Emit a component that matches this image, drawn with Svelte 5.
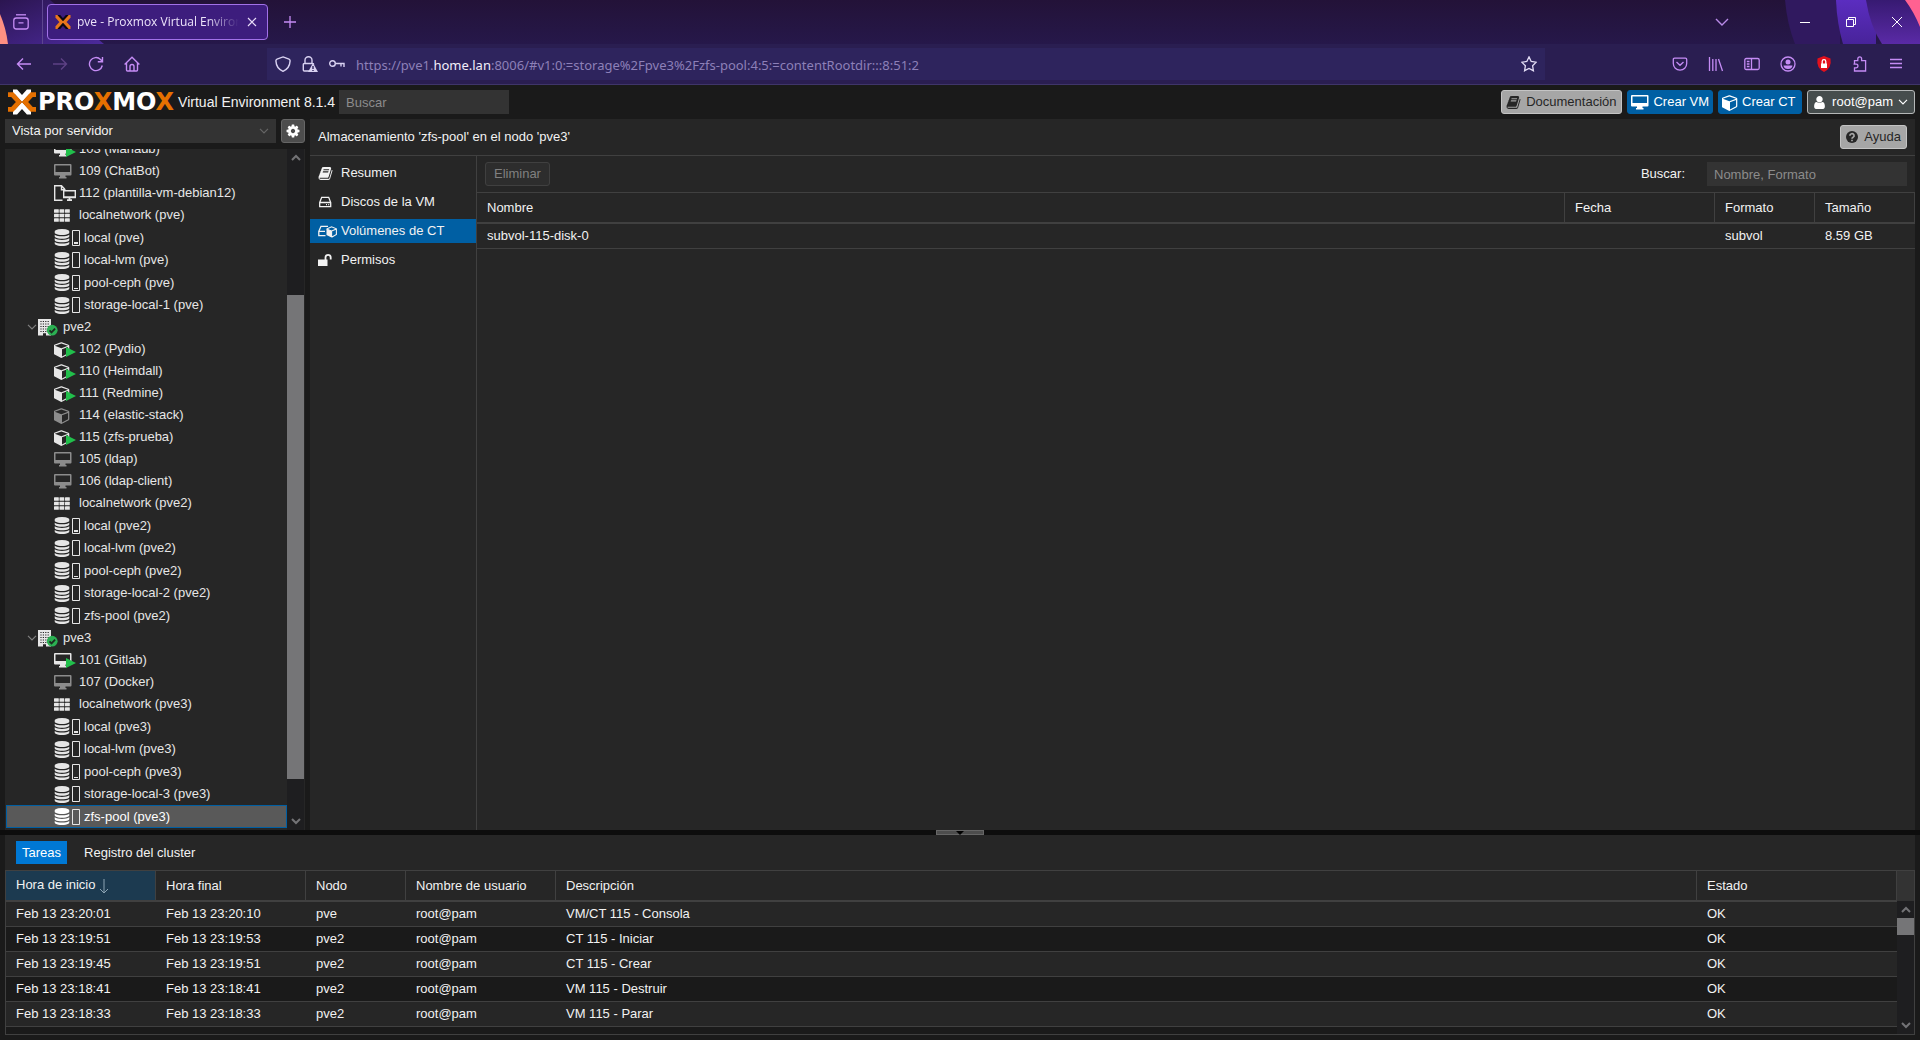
<script>
	let view = 'server';
	let search = '';
	let filter = '';
	let url =
		'https://pve1.home.lan:8006/#v1:0:=storage%2Fpve3%2Fzfs-pool:4:5:=contentRootdir:::8:51:2';
	let selected = 'zfs-pool (pve3)';
	let activeMenu = 'Volúmenes de CT';
	let activeTab = 'Tareas';

	$: host = url.indexOf('home.lan');

	const nodes = [
		{
			name: 'pve',
			guests: [
				{ text: '103 (Mariadb)', icon: 'desktop', running: true },
				{ text: '109 (ChatBot)', icon: 'desktop' },
				{ text: '112 (plantilla-vm-debian12)', icon: 'template', running: false }
			],
			storages: [
				{ name: 'local', usage: 2 },
				{ name: 'local-lvm', usage: 0 },
				{ name: 'pool-ceph', usage: 1 },
				{ name: 'storage-local-1', usage: 0 }
			]
		},
		{
			name: 'pve2',
			guests: [
				{ text: '102 (Pydio)', icon: 'cube', running: true },
				{ text: '110 (Heimdall)', icon: 'cube', running: true },
				{ text: '111 (Redmine)', icon: 'cube', running: true },
				{ text: '114 (elastic-stack)', icon: 'cube' },
				{ text: '115 (zfs-prueba)', icon: 'cube', running: true },
				{ text: '105 (ldap)', icon: 'desktop' },
				{ text: '106 (ldap-client)', icon: 'desktop' }
			],
			storages: [
				{ name: 'local', usage: 2 },
				{ name: 'local-lvm', usage: 0 },
				{ name: 'pool-ceph', usage: 1 },
				{ name: 'storage-local-2', usage: 0 },
				{ name: 'zfs-pool', usage: 0 }
			]
		},
		{
			name: 'pve3',
			guests: [
				{ text: '101 (Gitlab)', icon: 'desktop', running: true },
				{ text: '107 (Docker)', icon: 'desktop' }
			],
			storages: [
				{ name: 'local', usage: 2 },
				{ name: 'local-lvm', usage: 0 },
				{ name: 'pool-ceph', usage: 1 },
				{ name: 'storage-local-3', usage: 0 },
				{ name: 'zfs-pool', usage: 0 }
			]
		}
	];

	const menu = [
		{ text: 'Resumen', icon: 'book' },
		{ text: 'Discos de la VM', icon: 'hdd' },
		{ text: 'Volúmenes de CT', icon: 'volume' },
		{ text: 'Permisos', icon: 'unlock' }
	];

	const tasks = [
		{ start: 'Feb 13 23:20:01', end: 'Feb 13 23:20:10', node: 'pve', desc: 'VM/CT 115 - Consola' },
		{ start: 'Feb 13 23:19:51', end: 'Feb 13 23:19:53', node: 'pve2', desc: 'CT 115 - Iniciar' },
		{ start: 'Feb 13 23:19:45', end: 'Feb 13 23:19:51', node: 'pve2', desc: 'CT 115 - Crear' },
		{ start: 'Feb 13 23:18:41', end: 'Feb 13 23:18:41', node: 'pve2', desc: 'VM 115 - Destruir' },
		{ start: 'Feb 13 23:18:33', end: 'Feb 13 23:18:33', node: 'pve2', desc: 'VM 115 - Parar' }
	];

	const select = (name) => {
		selected = name;
	};
</script>

{#snippet icon(name)}
	{#if name === 'desktop'}
		<svg class="icon" width="18" height="16" viewBox="0 0 18 16" fill="currentColor">
			<path
				fill-rule="evenodd"
				d="M1 1h15.500a1 1 0 0 1 1 1v9.500a1 1 0 0 1-1 1H11.500v1.500h1V15.500H5v-1.500h1v-1.500H1a1 1 0 0 1-1-1V2a1 1 0 0 1 1-1zM1.500 2.500v6.500h14.500V2.500z"
			/>
		</svg>
	{:else if name === 'template'}
		<svg class="icon" width="22" height="18" viewBox="0 0 22 18" fill="none" stroke="currentColor">
			<path stroke-width="1.4" d="M8.500 16.300H.7V1.700h6.800l3.300 3.500M7.500 1.700v4h4" />
			<path stroke-width="1.4" d="M9.700 13.600V6.700h11.600v6.900z" />
			<path stroke-width="1.800" d="M9.700 13.200h11.600M13 16.200h5M15.500 13v3" />
		</svg>
	{:else if name === 'cube'}
		<svg class="icon" width="16" height="17" viewBox="64 0 1664 1792" fill="currentColor">
			<path
				d="M896 1629l640-349v-636l-640 233v752zm-64-865l698-254-698-254-698 254zm832-252v768q0 35-18 65t-49 47l-704 384q-28 16-61 16t-61-16l-704-384q-31-17-49-47t-18-65v-768q0-40 23-73t61-47l704-256q22-8 44-8t44 8l704 256q38 14 61 47t23 73z"
			/>
		</svg>
	{:else if name === 'grid'}
		<svg class="icon" width="16" height="13" viewBox="0 0 16 13" fill="currentColor">
			{#each [0, 5.5, 11] as x}
				{#each [0.2, 4.7, 9.2] as y}
					<rect {x} {y} width="4.8" height="3.6" rx=".5" />
				{/each}
			{/each}
		</svg>
	{:else if name === 'database'}
		<svg class="icon" width="16" height="17" viewBox="64 0 1664 1792" fill="currentColor">
			<path
				d="M896 768q237 0 443-43t325-127v170q0 69-103 128t-280 93.500-385 34.500-385-34.500-280-93.500-103-128v-170q119 84 325 127t443 43zm0 768q237 0 443-43t325-127v170q0 69-103 128t-280 93.500-385 34.500-385-34.500-280-93.500-103-128v-170q119 84 325 127t443 43zm0-384q237 0 443-43t325-127v170q0 69-103 128t-280 93.500-385 34.500-385-34.500-280-93.500-103-128v-170q119 84 325 127t443 43zm0-1152q208 0 385 34.500t280 93.500 103 128v128q0 69-103 128t-280 93.500-385 34.500-385-34.500-280-93.500-103-128v-128q0-69 103-128t280-93.500 385-34.500z"
			/>
		</svg>
	{:else if name === 'building'}
		<svg class="icon" width="20" height="17" viewBox="0 0 20 17">
			<path fill="#e6e6e6" d="M0 0h13v16.500H8V14.200H5v2.300H0z" />
			<path
				stroke="#262626"
				stroke-width="1"
				stroke-dasharray="1.200 1.200"
				d="M2.400 2.500h8.500M2.400 5h8.500M2.400 7.500h8.500M2.400 10h8.500M2.400 12.500h8.500"
			/>
			<circle cx="14.200" cy="11.200" r="5.400" fill="#2bb052" />
			<path fill="none" stroke="#1c2b20" stroke-width="1.800" d="M11.500 11.400l2 2 3.600-3.800" />
		</svg>
	{:else if name === 'book'}
		<svg class="icon" width="15" height="15" viewBox="0 0 1792 1792" fill="currentColor">
			<path
				d="M1703 478q40 57 18 129l-275 906q-19 64-76.500 107.500t-122.500 43.500h-923q-77 0-148.500-53.500t-99.500-131.500q-24-67-2-127 0-4 3-27t4-37q1-8-3-21.500t-3-19.500q2-11 8-21t16.500-23.500 16.500-23.500q23-38 45-91.500t30-91.500q3-10 .5-30t-.5-28q3-11 17-28t17-23q21-36 42-92t25-90q1-9-2.500-32t.5-28q4-13 22-30.500t22-22.500q19-26 42.500-84.500t27.500-96.500q1-8-3-25.500t-2-26.500q2-8 9-18t18-23 17-21q8-12 16.500-30.500t15-35 16-36 19.500-32 26.500-23.500 36-11.500 47.500 5.500l-1 3q38-9 51-9h761q74 0 114 56t18 130l-274 906q-36 119-71.500 153.500t-128.500 34.500h-869q-27 0-38 15-11 16-1 43 24 70 144 70h923q29 0 56-15.500t35-41.500l300-987q7-22 5-57 38 15 59 43zm-1064 2q-4 13 2 22.500t20 9.500h608q13 0 25.500-9.500t16.500-22.500l21-64q4-13-2-22.500t-20-9.500h-608q-13 0-25.500 9.500t-16.500 22.500zm-83 256q-4 13 2 22.500t20 9.500h608q13 0 25.500-9.500t16.500-22.500l21-64q4-13-2-22.500t-20-9.500h-608q-13 0-25.500 9.500t-16.500 22.500z"
			/>
		</svg>
	{:else if name === 'hdd'}
		<svg class="icon" width="15" height="14" viewBox="0 0 15 14" fill="none" stroke="currentColor">
			<path stroke-width="1.300" d="M1.700 7.500L3.700 2.300h7l2 5.200v4.200h-11zM1.700 7.500h11" />
			<path stroke-width="1.300" d="M8 9.700h1M10.200 9.700h1" />
		</svg>
	{:else if name === 'volume'}
		<svg class="icon" width="19" height="14" viewBox="0 0 19 14" fill="none" stroke="currentColor">
			<path stroke-width="1.300" d="M7.500 11.700H.8V7.300l2.200-5h7M.8 7.300H7" />
			<path fill="currentColor" stroke="none" d="M8.500 5l5 2v6.500l-5-2.500z" />
			<path stroke-width="1.100" d="M8.600 5l5-2.200 4.800 2v5.700l-4.800 2.700M13.600 7l4.800-2M8.600 5l5 2v6" />
		</svg>
	{:else if name === 'unlock'}
		<svg class="icon" width="15" height="14" viewBox="0 0 15 14" fill="currentColor">
			<path d="M0 6.500h9.500v6.500H0z" />
			<path
				fill="none"
				stroke="currentColor"
				stroke-width="1.800"
				d="M7.500 7V4.500a2.600 2.600 0 0 1 5.200 0V6.500"
			/>
		</svg>
	{:else if name === 'user'}
		<svg class="icon" width="15" height="15" viewBox="128 0 1536 1792" fill="currentColor">
			<path
				d="M1536 1399q0 109-62.500 187t-150.500 78h-854q-88 0-150.500-78t-62.500-187q0-85 8.500-160.500t31.500-152 58.500-131 94-89 134.500-34.500q131 128 313 128t313-128q76 0 134.500 34.500t94 89 58.500 131 31.500 152 8.500 160.500zm-256-887q0 159-112.500 271.500t-271.500 112.500-271.500-112.500-112.500-271.500 112.500-271.500 271.500-112.500 271.500 112.500 112.500 271.500z"
			/>
		</svg>
	{:else if name === 'help'}
		<svg class="icon" width="14" height="14" viewBox="0 0 14 14">
			<circle cx="7" cy="7" r="6" fill="currentColor" />
			<path
				fill="none"
				stroke="#a6a6a6"
				stroke-width="1.700"
				d="M4.900 5.700a2.100 1.900 0 1 1 3.200 1.500Q7 7.800 7 8.800M7 9.800v1.500"
			/>
		</svg>
	{:else if name === 'cog'}
		<svg class="icon" width="14" height="14" viewBox="64 64 1664 1664" fill="currentColor">
			<path
				d="M1152 896q0-106-75-181t-181-75-181 75-75 181 75 181 181 75 181-75 75-181zm512-109v222q0 12-8 23t-20 13l-185 28q-19 54-39 91 35 50 107 138 10 12 10 25t-9 23q-27 37-99 108t-94 71q-12 0-26-9l-138-108q-44 23-91 38-16 136-29 186-7 28-36 28h-222q-14 0-24.500-8.500t-11.500-21.500l-28-184q-49-16-90-37l-141 107q-10 9-25 9-14 0-25-11-126-114-165-168-7-10-7-23 0-12 8-23 15-21 51-66.500t54-70.500q-27-50-41-99l-183-27q-13-2-21-12.500t-8-23.500v-222q0-12 8-23t19-13l186-28q14-46 39-92-40-57-107-138-10-12-10-24 0-10 9-23 26-36 98.500-107.500t94.500-71.500q13 0 26 10l138 107q44-23 91-38 16-136 29-186 7-28 36-28h222q14 0 24.500 8.500t11.500 21.500l28 184q49 16 90 37l142-107q9-9 24-9 13 0 25 10 129 119 165 170 7 8 7 22 0 12-8 23-15 21-51 66.500t-54 70.500q26 50 41 98l183 28q13 2 21 12.500t8 23.500z"
			/>
		</svg>
	{:else if name === 'down'}
		<svg class="icon" width="10" height="6" viewBox="0 0 10 6" fill="none" stroke="currentColor">
			<path stroke-width="1.200" d="M1 .8l4 4 4-4" />
		</svg>
	{:else if name === 'up-arrow'}
		<svg class="icon" width="10" height="7" viewBox="0 0 10 7" fill="none" stroke="currentColor">
			<path stroke-width="2" d="M1 6l4-4 4 4" />
		</svg>
	{:else if name === 'down-arrow'}
		<svg class="icon" width="10" height="7" viewBox="0 0 10 7" fill="none" stroke="currentColor">
			<path stroke-width="2" d="M1 1l4 4 4-4" />
		</svg>
	{/if}
{/snippet}

<div class="page">
	<div class="tabbar">
		<svg class="theme-left" width="104" height="44" viewBox="0 0 104 44">
			<defs>
				<linearGradient id="left" x1="0" y1="0" x2="1" y2="1">
					<stop offset="0" stop-color="#2b1550" />
					<stop offset="1" stop-color="#4c2a9c" />
				</linearGradient>
			</defs>
			<path fill="url(#left)" d="M0 0h50l54 44H0z" />
			<path fill="#ff9082" d="M0 14q6 14 8 30H0z" />
		</svg>
		<svg class="theme-right" width="140" height="44" viewBox="0 0 140 44">
			<defs>
				<linearGradient id="right" x1="0" y1="0" x2="0" y2="1">
					<stop offset="0" stop-color="#5b2dc0" />
					<stop offset="1" stop-color="#48239a" />
				</linearGradient>
				<linearGradient id="edge" x1="0" y1="0" x2="0" y2="1">
					<stop offset="0" stop-color="#371a72" />
					<stop offset="1" stop-color="#5a2aa6" />
				</linearGradient>
			</defs>
			<path fill="#30195f" d="M5 0h55v44H15Q7 24 5 0z" />
			<path fill="url(#right)" d="M56 0h40v44H63Q57 24 56 0z" />
			<path fill="url(#edge)" d="M86 0h54v44h-38Q90 26 86 0z" />
			<path fill="#ff6191" d="M125 0h15v27Q134 12 125 0z" />
		</svg>
		<button class="chrome-btn first" aria-label="Firefox View">
			<svg width="16" height="16" viewBox="0 0 16 16" fill="none" stroke="#c58cf5" stroke-width="1.300">
				<path d="M3 .8h10" />
				<path d="M.8 6.500a2.500 2.500 0 0 1 2.500-2.500h9.400a2.500 2.500 0 0 1 2.500 2.500v6a2.500 2.500 0 0 1-2.500 2.500H3.300a2.500 2.500 0 0 1-2.500-2.500zM5.500 8.800h5" />
			</svg>
		</button>
		<div class="tab">
			<svg width="16" height="14" viewBox="0 0 16 14" fill="none" stroke-width="3.200">
				<path stroke="#0d0713" d="M3 0l5 5.500L13 0M3 14l5-5.500 5 5.500" />
				<path stroke="#e9761c" d="M.5 1.500h1L6.500 7l-5 5.500h-1M15.500 1.500h-1L9.500 7l5 5.500h1" />
			</svg>
			<span class="tab-title">pve - Proxmox Virtual Environment</span>
			<button class="chrome-btn small" aria-label="Cerrar pestaña">
				<svg width="10" height="10" viewBox="0 0 10 10" stroke="#e8dcf8" stroke-width="1.200">
					<path d="M1 1l8 8M9 1L1 9" />
				</svg>
			</button>
		</div>
		<button class="chrome-btn plus" aria-label="Nueva pestaña">
			<svg width="12" height="12" viewBox="0 0 12 12" stroke="#c58cf5" stroke-width="1.300">
				<path d="M6 0v12M0 6h12" />
			</svg>
		</button>
		<div class="window-btns">
			<button class="chrome-btn" aria-label="Listar pestañas">
				<svg width="14" height="8" viewBox="0 0 14 8" fill="none" stroke="#b98be8" stroke-width="1.400">
					<path d="M1 1l6 6 6-6" />
				</svg>
			</button>
			<button class="chrome-btn wide" aria-label="Minimizar">
				<svg width="10" height="10" viewBox="0 0 10 10" stroke="#fff"><path d="M0 5.500h10" /></svg>
			</button>
			<button class="chrome-btn wide" aria-label="Restaurar">
				<svg width="10" height="10" viewBox="0 0 10 10" fill="none" stroke="#fff">
					<path d="M.5 2.500h7v7h-7zM2.500 2.500v-2h7v7h-2" />
				</svg>
			</button>
			<button class="chrome-btn wide" aria-label="Cerrar">
				<svg width="10" height="10" viewBox="0 0 10 10" stroke="#fff"><path d="M0 0l10 10M10 0L0 10" /></svg>
			</button>
		</div>
	</div>

	<div class="navbar">
		<div class="nav-left">
			<button class="chrome-btn" aria-label="Atrás">
				<svg width="16" height="16" viewBox="0 0 16 16" fill="none" stroke="#c58cf5" stroke-width="1.400">
					<path d="M15 8H1.500M7 2.500L1.500 8 7 13.500" />
				</svg>
			</button>
			<button class="chrome-btn" aria-label="Adelante">
				<svg width="16" height="16" viewBox="0 0 16 16" fill="none" stroke="#5e4285" stroke-width="1.400">
					<path d="M1 8h13.500M9 2.500L14.500 8 9 13.500" />
				</svg>
			</button>
			<button class="chrome-btn" aria-label="Recargar">
				<svg width="16" height="16" viewBox="0 0 16 16" fill="none" stroke="#c58cf5" stroke-width="1.400">
					<path d="M14.300 9.500A6.500 6.500 0 1 1 12.500 3.400L14.300 5.200M14.500 1v4.700H9.800" />
				</svg>
			</button>
			<button class="chrome-btn" aria-label="Inicio">
				<svg width="16" height="16" viewBox="0 0 16 16" fill="none" stroke="#c58cf5" stroke-width="1.400">
					<path d="M.6 8.500L8 1.300l7.400 7.200M2.500 7v7a1 1 0 0 0 1 1h9a1 1 0 0 0 1-1V7" />
					<path d="M6 15v-4.500a2 2 0 0 1 4 0V15" />
				</svg>
			</button>
		</div>
		<div class="urlbar">
			<svg width="16" height="16" viewBox="0 0 16 16" fill="none" stroke="#d9d2f2" stroke-width="1.400">
				<path d="M8 .9l6 2.200q1.200.5 1.100 1.800Q14.700 12.500 8 15.300 1.300 12.500.9 4.900.8 3.600 2 3.100z" />
			</svg>
			<svg width="16" height="16" viewBox="0 0 16 16" fill="none" stroke="#d9d2f2" stroke-width="1.400">
				<path d="M8 15H2.300a1 1 0 0 1-1-1V8.500a1 1 0 0 1 1-1h8.400q1 0 1 1M3 7.500V4.300a3.500 3.500 0 0 1 7 0v3.200" />
				<path fill="#d9d2f2" stroke="none" d="M11 7l5 9H6z" />
				<path stroke="#2e245d" d="M11 10v3M11 14v1" />
			</svg>
			<svg width="16" height="16" viewBox="0 0 16 16" fill="none" stroke="#d9d2f2" stroke-width="1.400">
				<circle cx="3.500" cy="7.500" r="2.800" />
				<path d="M6.500 7.500H15v3.500M12 7.500v3" />
			</svg>
			<div class="url">
				<input type="text" aria-label="Dirección" bind:value={url} />
				<span class="url-text" aria-hidden="true"
					>{url.slice(0, host)}<b>{url.slice(host, host + 8)}</b>{url.slice(host + 8)}</span
				>
			</div>
			<svg width="16" height="16" viewBox="0 0 16 16" fill="none" stroke="#e3ddf5" stroke-width="1.300">
				<path d="M8 .9l2.200 4.600 5 .7-3.600 3.500.8 5L8 12.400l-4.400 2.300.8-5L.8 6.200l5-.7z" />
			</svg>
		</div>
		<div class="nav-right">
			<button class="chrome-btn" aria-label="Pocket">
				<svg width="16" height="16" viewBox="0 0 16 16" fill="none" stroke="#c58cf5" stroke-width="1.300">
					<path d="M1.300 3.500q0-1.300 1.300-1.300h10.800q1.300 0 1.300 1.300v4a6.700 6.700 0 0 1-13.400 0zM4.500 6L8 9.300 11.500 6" />
				</svg>
			</button>
			<button class="chrome-btn" aria-label="Biblioteca">
				<svg width="16" height="16" viewBox="0 0 16 16" stroke="#c58cf5" stroke-width="1.300">
					<path d="M1.500 1v14M4.800 3v12M8 3v12M10.500 3l4 12" />
				</svg>
			</button>
			<button class="chrome-btn" aria-label="Barra lateral">
				<svg width="16" height="16" viewBox="0 0 16 16" fill="none" stroke="#c58cf5" stroke-width="1.300">
					<path d="M.8 4q0-1.500 1.500-1.500h11.400q1.500 0 1.500 1.500v8q0 1.500-1.500 1.500H2.300Q.8 13.500.8 12zM7.500 2.500v11M2.800 5.500h2.700M2.800 8h2.700M2.800 10.500h2.700" />
				</svg>
			</button>
			<button class="chrome-btn" aria-label="Cuenta">
				<svg width="16" height="16" viewBox="0 0 16 16" fill="none" stroke="#c58cf5" stroke-width="1.300">
					<circle cx="8" cy="8" r="7" />
					<circle cx="8" cy="6" r="2.500" fill="#c58cf5" stroke="none" />
					<path fill="#c58cf5" stroke="none" d="M3.500 9.500h9Q12 13 8 13T3.500 9.500z" />
				</svg>
			</button>
			<button class="chrome-btn" aria-label="Extensión">
				<svg width="16" height="16" viewBox="0 0 16 16">
					<path fill="#e3101c" d="M8 0l6.500 2.500Q16 12 8 16 0 12 1.500 2.500z" />
					<path fill="#fff" d="M5 7.500h6V12H5z" />
					<path fill="none" stroke="#fff" stroke-width="1.300" d="M6.200 8V5.500a1.800 1.800 0 0 1 3.600 0V8" />
				</svg>
			</button>
			<button class="chrome-btn" aria-label="Extensiones">
				<svg width="16" height="16" viewBox="0 0 16 16" fill="none" stroke="#c58cf5" stroke-width="1.300">
					<path d="M2.500 7.500V4.700h3.300V2.800a1.900 1.900 0 0 1 3.800 0v1.900h4V15H2.500v-3.200h1.700a1.800 1.800 0 0 0 0-3.600H1.500" />
				</svg>
			</button>
			<button class="chrome-btn" aria-label="Menú">
				<svg width="16" height="16" viewBox="0 0 16 16" stroke="#c58cf5" stroke-width="1.300">
					<path d="M2 3.500h12M2 7.500h12M2 11.500h12" />
				</svg>
			</button>
		</div>
	</div>

	<header>
		<div class="logo">
			<svg width="30" height="26" viewBox="0 0 30 26" fill="none" stroke-width="4.800">
				<path stroke="#fff" d="M6 2.800h3L15 9.500l6-6.700h3M6 23.200h3L15 16.500l6 6.700h3" />
				<path stroke="#e57000" d="M1 5.600h4.300L12 13l-6.700 7.400H1M29 5.600h-4.300L18 13l6.700 7.400H29" />
			</svg>
			<span class="brand">PRO<i>X</i>MO<i>X</i></span>
		</div>
		<span class="product">Virtual Environment 8.1.4</span>
		<input class="field" type="text" placeholder="Buscar" aria-label="Buscar" bind:value={search} />
		<div class="actions">
			<button class="btn grey">{@render icon('book')}Documentación</button>
			<button class="btn blue">{@render icon('desktop')}Crear VM</button>
			<button class="btn blue">{@render icon('cube')}Crear CT</button>
			<button class="btn user">{@render icon('user')}root@pam{@render icon('down')}</button>
		</div>
	</header>

	<main>
		<aside>
			<div class="view">
				<div class="view-select">
					<select aria-label="Vista" bind:value={view}>
						<option value="server">Vista por servidor</option>
					</select>
					{@render icon('down')}
				</div>
				<button class="gear" aria-label="Ajustes">{@render icon('cog')}</button>
			</div>
			<div class="tree-wrap">
				<div class="tree">
					{#each nodes as node, n}
						<!-- the first node's own row is scrolled out of view -->
						{#if n > 0}
							<button class="row node" on:click={() => select(node.name)}>
								<span class="expander">{@render icon('down')}</span>
								{@render icon('building')}
								{node.name}
							</button>
						{/if}
						{#each node.guests as guest}
							<button
								class="row guest"
								class:stopped={!guest.running && guest.icon !== 'template'}
								on:click={() => select(guest.text)}
							>
								<span class="guest-icon">
									{@render icon(guest.icon)}
									{#if guest.running}
										<svg class="play" width="10" height="10" viewBox="0 0 10 10">
											<path fill="#21bf4b" d="M0 0l10 5-10 5z" />
										</svg>
									{/if}
								</span>
								<span>{guest.text}</span>
							</button>
						{/each}
						<button class="row guest" on:click={() => select(`localnetwork (${node.name})`)}>
							<span class="guest-icon">{@render icon('grid')}</span>
							<span>localnetwork ({node.name})</span>
						</button>
						<div class="storages">
							{#each node.storages as storage}
								<button
									class="row storage"
									class:selected={selected === `${storage.name} (${node.name})`}
									on:click={() => select(`${storage.name} (${node.name})`)}
								>
									{@render icon('database')}
									<svg class="usage" width="8" height="16" viewBox="0 0 8 16">
										<path fill="none" stroke="#e6e6e6" d="M.5.5h7v15h-7z" />
										{#if storage.usage}
											<rect x="2" y={14 - storage.usage} width="4" height={storage.usage} fill="#e6e6e6" />
										{/if}
									</svg>
									<span>{storage.name} ({node.name})</span>
								</button>
							{/each}
						</div>
					{/each}
				</div>
				<div class="scroll tree-scroll">
					<span class="arrow">{@render icon('up-arrow')}</span>
					<div class="track tree-track"><div class="thumb"></div></div>
					<span class="arrow">{@render icon('down-arrow')}</span>
				</div>
			</div>
		</aside>

		<section class="content">
			<div class="title">
				<span>Almacenamiento 'zfs-pool' en el nodo 'pve3'</span>
				<button class="btn grey">{@render icon('help')}Ayuda</button>
			</div>
			<div class="columns">
				<nav>
					{#each menu as item}
						<button
							class="menu-item"
							class:active={activeMenu === item.text}
							on:click={() => (activeMenu = item.text)}
						>
							<span class="menu-icon">{@render icon(item.icon)}</span>
							{item.text}
						</button>
					{/each}
				</nav>
				<div class="volumes">
					<div class="toolbar">
						<button class="btn disabled" disabled>Eliminar</button>
						<label for="filter">Buscar:</label>
						<input
							class="field"
							id="filter"
							type="text"
							placeholder="Nombre, Formato"
							bind:value={filter}
						/>
					</div>
					<table class="volume-table">
						<colgroup>
							<col />
							<col class="w150" />
							<col class="w100" />
							<col class="w100" />
						</colgroup>
						<thead>
							<tr>
								<th scope="col">Nombre</th>
								<th scope="col">Fecha</th>
								<th scope="col">Formato</th>
								<th scope="col">Tamaño</th>
							</tr>
						</thead>
						<tbody>
							<tr>
								<td>subvol-115-disk-0</td>
								<td></td>
								<td>subvol</td>
								<td>8.59 GB</td>
							</tr>
						</tbody>
					</table>
				</div>
			</div>
		</section>
	</main>

	<div class="splitter">
		<button class="collapse" aria-label="Contraer">
			<svg width="8" height="4" viewBox="0 0 8 4"><path d="M0 0h8L4 4z" /></svg>
		</button>
	</div>

	<section class="log">
		<div class="tabs">
			{#each ['Tareas', 'Registro del cluster'] as tab}
				<button class:active={activeTab === tab} on:click={() => (activeTab = tab)}>{tab}</button>
			{/each}
		</div>
		<div class="task-wrap">
			<table class="task-table">
				<colgroup>
					<col class="w150" />
					<col class="w150" />
					<col class="w100" />
					<col class="w150" />
					<col />
					<col class="w200" />
				</colgroup>
				<thead>
					<tr>
						<th scope="col" class="sorted">
							Hora de inicio
							<svg width="10" height="15" viewBox="0 0 10 15" fill="none" stroke="#8ca3b3">
								<path d="M5 0v14M1 10l4 4 4-4" />
							</svg>
						</th>
						<th scope="col">Hora final</th>
						<th scope="col">Nodo</th>
						<th scope="col">Nombre de usuario</th>
						<th scope="col">Descripción</th>
						<th scope="col">Estado</th>
					</tr>
				</thead>
				<tbody>
					{#each tasks as task}
						<tr>
							<td>{task.start}</td>
							<td>{task.end}</td>
							<td>{task.node}</td>
							<td>root@pam</td>
							<td>{task.desc}</td>
							<td>OK</td>
						</tr>
					{/each}
				</tbody>
			</table>
			<div class="scroll">
				<span class="corner"></span>
				<span class="arrow">{@render icon('up-arrow')}</span>
				<div class="track"><div class="thumb small"></div></div>
				<span class="arrow">{@render icon('down-arrow')}</span>
			</div>
		</div>
	</section>
</div>

<style>
	:global(body) {
		margin: 0;
		background-color: #1a1a1a;
	}

	.page,
	.page * {
		box-sizing: border-box;
	}

	.page {
		display: flex;
		flex-direction: column;
		height: 100vh;
		background-color: #1a1a1a;
		color: #f2f2f2;
		font-family: 'Liberation Sans', Arial, sans-serif;
		font-size: 13px;
		line-height: 16px;
	}

	button,
	input,
	select {
		margin: 0;
		font: inherit;
		color: inherit;
		outline: none;
	}

	svg {
		flex: none;
		display: block;
	}

	/* browser chrome */
	.chrome-btn {
		display: flex;
		align-items: center;
		justify-content: center;
		width: 36px;
		height: 36px;
		padding: 0;
		border: none;
		background: none;
	}

	.tabbar {
		position: relative;
		display: flex;
		align-items: center;
		height: 44px;
		flex: none;
		background: linear-gradient(#231238, #26184a);
		font-family: 'Open Sans', 'Noto Sans', sans-serif;
		font-size: 12px;
	}

	.theme-left,
	.theme-right {
		position: absolute;
		top: 0;
	}

	.theme-left {
		left: 0;
	}

	.theme-right {
		right: 0;
	}

	.chrome-btn.first {
		position: relative;
		width: 43px;
		height: 44px;
		border-right: 1px solid #5d4590;
	}

	.tab {
		position: relative;
		display: flex;
		align-items: center;
		gap: 6px;
		width: 221px;
		height: 36px;
		margin-left: 4px;
		padding: 0 4px 0 7px;
		border: 1px solid #a271e8;
		border-radius: 4px;
		background-color: #3d1d7d;
		color: #ece4fa;
	}

	.tab-title {
		flex: 1;
		overflow: hidden;
		margin-right: -4px;
		white-space: nowrap;
		mask-image: linear-gradient(to right, #000 80%, transparent);
	}

	.chrome-btn.small {
		width: 22px;
		height: 22px;
	}

	.chrome-btn.plus {
		width: 44px;
	}

	.window-btns {
		position: relative;
		display: flex;
		align-items: center;
		margin-left: auto;
	}

	.window-btns .chrome-btn:first-child {
		margin-right: 42px;
	}

	.chrome-btn.wide {
		width: 46px;
	}

	.navbar {
		display: flex;
		align-items: center;
		height: 41px;
		flex: none;
		background-color: #2a1e51;
		border-bottom: 1px solid #3f3569;
	}

	.nav-left {
		display: flex;
		padding-left: 6px;
		width: 267px;
	}

	.nav-right {
		display: flex;
		justify-content: flex-end;
		width: 375px;
		padding-right: 6px;
	}

	.urlbar {
		display: flex;
		align-items: center;
		gap: 11px;
		flex: 1;
		height: 32px;
		padding: 0 8px;
		background-color: #2e245d;
	}

	.url {
		display: grid;
		flex: 1;
		align-items: center;
		padding-top: 2px;
		font-family: 'Noto Sans', 'Open Sans', sans-serif;
		font-size: 13px;
		line-height: 20px;
	}

	.url input,
	.url-text {
		grid-area: 1 / 1;
		min-width: 0;
		padding: 0;
		white-space: pre;
	}

	.url input {
		border: none;
		background: none;
		color: transparent;
		caret-color: #fff;
	}

	.url-text {
		color: #8d80b8;
		pointer-events: none;
	}

	.url-text b {
		font-weight: normal;
		color: #f2effa;
	}

	/* application header */
	header {
		display: flex;
		align-items: center;
		gap: 4px;
		height: 34px;
		padding: 0 5px;
		flex: none;
	}

	.logo {
		display: flex;
		align-items: center;
		gap: 1px;
		padding-left: 2px;
	}

	.brand {
		font-family: 'DejaVu Sans', sans-serif;
		font-size: 24px;
		font-weight: bold;
		line-height: 26px;
		color: #fff;
	}

	.brand i {
		font-style: normal;
		color: #e57000;
	}

	.product {
		font-size: 14px;
		white-space: nowrap;
	}

	.field {
		height: 24px;
		padding: 0 7px;
		border: none;
		background-color: #333;
	}

	.field::placeholder {
		color: #8c8c8c;
		opacity: 1;
	}

	header .field {
		width: 170px;
	}

	.actions {
		display: flex;
		gap: 5px;
		margin-left: auto;
	}

	.btn {
		display: flex;
		align-items: center;
		gap: 5px;
		height: 24px;
		padding: 0 5px 0 4px;
		border: 1px solid #404040;
		border-radius: 3px;
		white-space: nowrap;
	}

	.btn.grey {
		border-color: #c4c4c4;
		background-color: #a6a6a6;
		color: #262626;
	}

	.btn.blue {
		gap: 4px;
		min-width: 84px;
		padding: 0 3px;
		border-color: #005fa3;
		background-color: #005fa3;
		color: #fff;
	}

	.btn.user {
		padding: 0 6px 0 4px;
		border-color: #b5b8b8;
		background-color: #464d4d;
		color: #fff;
	}

	.btn.disabled {
		padding: 0 8px;
		background-color: #2d2d2d;
		color: #808080;
	}

	/* resource tree */
	main {
		display: flex;
		flex: 1;
		gap: 5px;
		min-height: 0;
		padding: 0 5px;
	}

	aside {
		display: flex;
		flex-direction: column;
		gap: 6px;
		width: 300px;
		flex: none;
	}

	.view {
		display: flex;
		gap: 5px;
	}

	.view-select {
		display: grid;
		flex: 1;
		align-items: center;
		background-color: #333;
		color: #666;
	}

	.view-select select {
		grid-area: 1 / 1;
		height: 24px;
		padding: 0 7px;
		border: none;
		appearance: none;
		background: none;
		color: #f2f2f2;
	}

	.view-select :global(.icon) {
		grid-area: 1 / 1;
		justify-self: end;
		margin-right: 7px;
		pointer-events: none;
	}

	.gear {
		display: flex;
		align-items: center;
		justify-content: center;
		width: 24px;
		height: 24px;
		padding: 0;
		border: 1px solid #666;
		border-radius: 3px;
		background-color: #4d4d4d;
		color: #fff;
	}

	.tree-wrap {
		display: flex;
		flex: 1;
		min-height: 0;
		background-color: #262626;
	}

	.tree {
		display: flex;
		flex: 1;
		flex-direction: column;
		justify-content: flex-end;
		overflow: hidden;
		padding: 0 0 2px 1px;
	}

	.row {
		display: flex;
		align-items: center;
		flex: none;
		width: 100%;
		height: 22px;
		padding: 0;
		border: 1px solid transparent;
		background: none;
		color: #e6e6e6;
		text-align: left;
	}

	.row.node {
		gap: 5px;
		padding-left: 20px;
	}

	.expander {
		margin-right: -4px;
		color: #808080;
	}

	.row.guest,
	.row.storage {
		padding-left: 47px;
	}

	.guest-icon {
		position: relative;
		width: 25px;
	}

	.stopped .guest-icon {
		color: #8c8c8c;
	}

	.play {
		position: absolute;
		top: 6px;
		left: 12px;
	}

	.usage {
		margin: 0 4px 0 2px;
	}

	.storages .row:nth-child(odd) {
		height: 23px;
	}

	.storages .row.selected {
		border-color: #005fa3;
		background-color: #595959;
		color: #fff;
	}

	.scroll {
		display: flex;
		flex-direction: column;
		width: 17px;
		flex: none;
		background-color: #1e1e20;
	}

	.tree-scroll {
		margin-right: 1px;
	}

	.arrow {
		display: flex;
		align-items: center;
		justify-content: center;
		height: 17px;
		color: #737376;
	}

	.track {
		display: flex;
		flex: 1;
		flex-direction: column;
		justify-content: flex-start;
	}

	.tree-track {
		justify-content: flex-end;
		padding-bottom: 34px;
	}

	.thumb {
		height: 79%;
		background-color: #757577;
	}

	.thumb.small {
		height: 17px;
	}

	/* storage view */
	.content {
		display: flex;
		flex: 1;
		flex-direction: column;
		min-width: 0;
		background-color: #262626;
	}

	.title {
		display: flex;
		align-items: center;
		justify-content: space-between;
		height: 37px;
		padding: 0 8px;
		border-bottom: 1px solid #404040;
	}

	.columns {
		display: flex;
		flex: 1;
	}

	nav {
		display: flex;
		flex-direction: column;
		gap: 5px;
		width: 167px;
		padding-top: 5px;
		border-right: 1px solid #404040;
	}

	.menu-item {
		display: flex;
		align-items: center;
		height: 24px;
		padding: 0 0 0 8px;
		border: none;
		background: none;
	}

	.menu-item.active {
		background-color: #005fa3;
	}

	.menu-icon {
		width: 23px;
	}

	.volumes {
		flex: 1;
		min-width: 0;
	}

	.toolbar {
		display: flex;
		align-items: center;
		height: 37px;
		padding: 0 8px;
		border-bottom: 1px solid #404040;
	}

	.toolbar label {
		margin-left: auto;
		margin-right: 22px;
	}

	.toolbar .field {
		width: 200px;
	}

	table {
		width: 100%;
		border-collapse: separate;
		border-spacing: 0;
		table-layout: fixed;
	}

	th,
	td {
		padding: 0 10px;
		border-bottom: 1px solid #404040;
		font-weight: normal;
		text-align: left;
		white-space: nowrap;
	}

	th {
		height: 31px;
		border-right: 1px solid #404040;
		border-bottom-width: 2px;
	}

	td {
		height: 25px;
	}

	.w100 {
		width: 100px;
	}

	.w150 {
		width: 150px;
	}

	.w200 {
		width: 200px;
	}

	/* task log */
	.splitter {
		display: flex;
		justify-content: center;
		height: 5px;
		flex: none;
		background-color: #0d0d0d;
	}

	.collapse {
		display: flex;
		justify-content: center;
		width: 48px;
		height: 5px;
		padding: 0;
		border: 1px solid #666;
		background-color: #4d4d4d;
	}

	.log {
		flex: none;
		padding: 0 5px 5px;
	}

	.tabs {
		display: flex;
		gap: 5px;
		padding: 6px 11px;
		background-color: #262626;
	}

	.tabs button {
		height: 23px;
		padding: 0 6px;
		border: none;
		background: none;
	}

	.tabs button + button {
		padding: 0 12px;
	}

	.tabs .active {
		background-color: #0078d4;
		color: #fff;
	}

	.task-wrap {
		display: flex;
		height: 165px;
		border: 1px solid #404040;
	}

	.task-table {
		flex: 1;
		height: max-content;
	}

	.task-table th {
		background-color: #262626;
	}

	.task-table .sorted {
		background-color: #1c3a50;
	}

	.sorted svg {
		display: inline-block;
		vertical-align: middle;
	}

	.task-table tbody tr:nth-child(odd) {
		background-color: #262626;
	}

	.corner {
		height: 30px;
		background-color: #333;
	}
</style>
